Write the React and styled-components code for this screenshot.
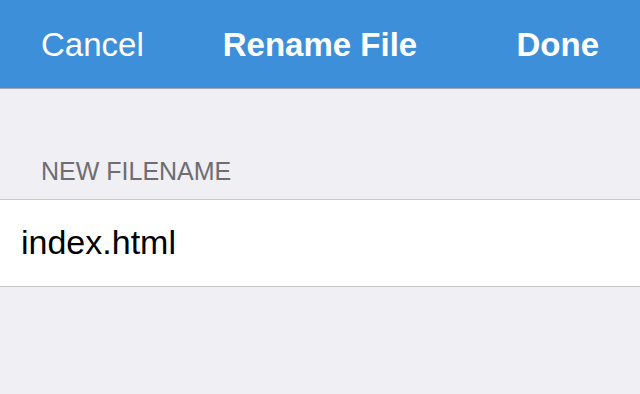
import React from "react";
import styled, { createGlobalStyle } from "styled-components";

const Global = createGlobalStyle`
  html, body { margin: 0; padding: 0; background: #efeff4; }
  body { font-family: "Liberation Sans", Arial, sans-serif; -webkit-font-smoothing: antialiased; }
`;

const Page = styled.div`
  width: 640px;
  height: 394px;
  background: #efeff4;
  overflow: hidden;
`;

const NavBar = styled.header`
  box-sizing: border-box;
  height: 89px;
  padding: 2px 41px 0 41px;
  background: #3d8fd9;
  border-bottom: 1px solid #a3a7ab;
  display: grid;
  grid-template-columns: 1fr auto 1fr;
  align-items: center;
  color: #fff;
  font-size: 33px;
  line-height: 40px;
`;

const NavButton = styled.button`
  all: unset;
  cursor: pointer;
  color: #fff;
  font-size: 33px;
  font-weight: ${(p) => (p.$bold ? 700 : 400)};
  justify-self: ${(p) => (p.$align === "right" ? "end" : "start")};
`;

const Title = styled.h1`
  margin: 0;
  font-size: 33px;
  font-weight: 700;
`;

const Section = styled.section`
  padding-top: 67px;
`;

const SectionLabel = styled.div`
  padding-left: 41px;
  margin-bottom: 13px;
  font-size: 25px;
  line-height: 30px;
  color: #6d6d72;
  text-transform: uppercase;
`;

const Row = styled.div`
  box-sizing: border-box;
  height: 88px;
  background: #fff;
  border-top: 1px solid #c8c7cc;
  border-bottom: 1px solid #c8c7cc;
  display: flex;
  align-items: center;
  padding: 0 21px 3px;
`;

const Input = styled.input`
  all: unset;
  flex: 1;
  font-family: "Liberation Sans", Arial, sans-serif;
  font-size: 34px;
  line-height: 40px;
  color: #000;
`;

export default function App() {
  return (
    <Page>
      <Global />
      <NavBar>
        <NavButton>Cancel</NavButton>
        <Title>Rename File</Title>
        <NavButton $bold $align="right">Done</NavButton>
      </NavBar>
      <Section>
        <SectionLabel>New Filename</SectionLabel>
        <Row>
          <Input defaultValue="index.html" />
        </Row>
      </Section>
    </Page>
  );
}
